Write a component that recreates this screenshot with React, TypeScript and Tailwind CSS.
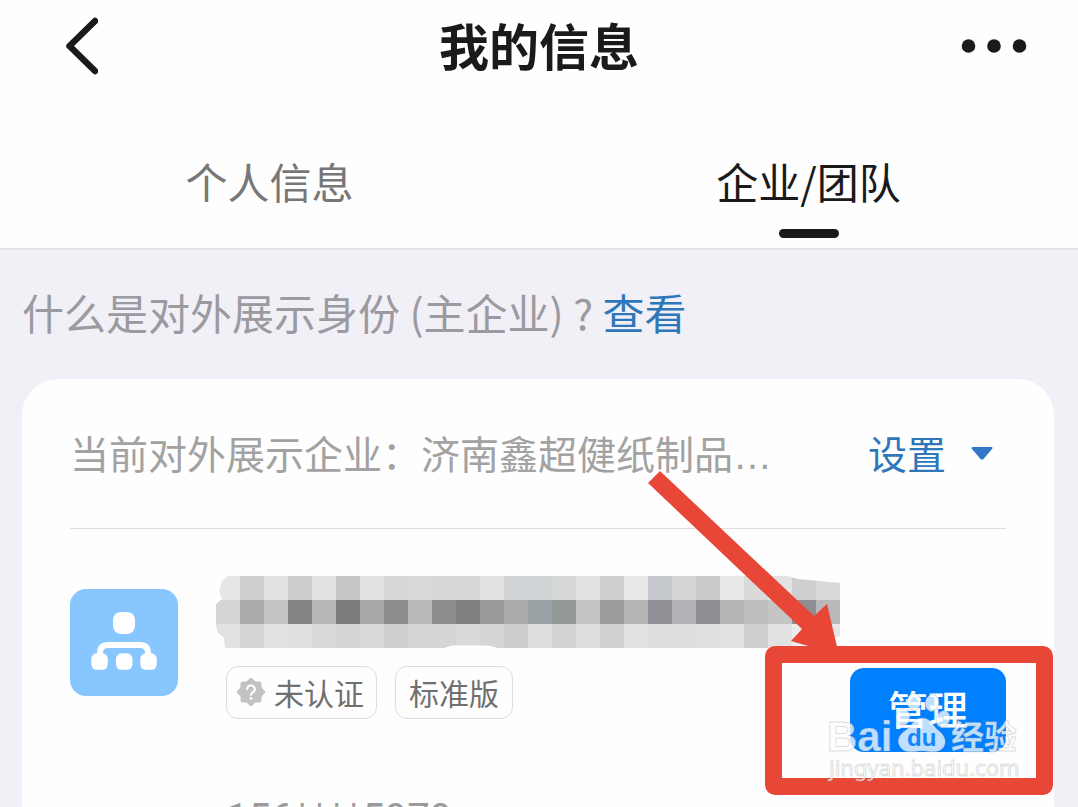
import { useState } from 'react';
import clsx from 'clsx';

const FONT_CLASS = "font-['Noto_Sans_CJK_SC',sans-serif]";

const TABS = ['个人信息', '企业/团队'];

const CELL = 24;

const MOSAIC_ROWS = [
  [
    '#e6e6e6', '#cfcfcf', '#e2e2e2', '#cdcdcd', '#e2e2e2', '#c6c6c6', '#e2e2e2', '#d8d8d8', '#d9d9d9', '#d8d8d8',
    '#d6d8d7', '#e1e1e1', '#d0d4d6', '#d0d4d7', '#d6d8d8', '#e2e2e2', '#cecece', '#e9e9e9', '#c6c9cd', '#d5d5d6',
    '#cbcbcc', '#e8e8e8', '#dadada', '#e3e3e3', '#cfcfcf', '#d9d9d9',
  ],
  [
    '#d5d5d5', '#a9abad', '#c4c4c4', '#858585', '#b7b7b7', '#7c7c7c', '#a9a9a9', '#8d8d8d', '#b9b9b9', '#8b8c8b',
    '#80827f', '#999b9a', '#a9acab', '#98a1a3', '#939a97', '#c2c3c2', '#9a9d9b', '#b5b5b5', '#909196', '#b3b3b8',
    '#8e8f93', '#b5b5b5', '#bdbdbd', '#c5c5c5', '#8f8f93', '#b9b9bb',
  ],
  [
    '#e1e1e1', '#d3d4d4', '#e0e1e0', '#dfe1df', '#d9dbda', '#d5d6d5', '#d8dad9', '#cecfce', '#d3d4d3', '#d4d6d5',
    '#d9dbda', '#d4d6d5', '#cccecd', '#dddfde', '#d2d4d3', '#dcdddc', '#cfd0cf', '#e0e1e0', '#dcdedd', '#dddfde',
    '#dfe0df', '#e1e1e1', '#cfcfcf', '#e2e2e2', '#ececec', '#e6e6e6',
  ],
];

function BlurredName() {
  return (
    <svg viewBox="0 0 624 72" className="w-full max-w-[624px]" aria-hidden="true">
      <clipPath id="smear">
        <path d="M12 0 H572 L582 3 L624 7 V60 L600 68 L560 72 H282 L272 69.500 H236 L228 72 H9 L8 62 L2 57 L0 50 V28 L6 23 L3 16 L6 5 Z" />
      </clipPath>
      <g clipPath="url(#smear)" shapeRendering="crispEdges">
        {MOSAIC_ROWS.map((row, y) =>
          row.map((fill, x) => (
            <rect key={`${x}-${y}`} x={x * CELL} y={y * CELL} width={CELL} height={CELL} fill={fill} />
          )),
        )}
      </g>
    </svg>
  );
}

function OrgIcon() {
  return (
    <svg viewBox="0 0 108 108" className="mt-[13px] size-[108px] shrink-0" aria-hidden="true">
      <rect width="108" height="107" rx="16" fill="#87c6ff" />
      <rect x="43" y="23" width="22" height="22" rx="8" fill="#fff" />
      <path d="M30 70 V64 Q30 56 38 56 H70 Q78 56 78 64 V70" fill="none" stroke="#fff" strokeWidth="6" />
      <rect x="21.300" y="64.300" width="16.500" height="16.500" rx="5.500" fill="#fff" />
      <rect x="46" y="64.300" width="16.500" height="16.500" rx="5.500" fill="#fff" />
      <rect x="70.300" y="64.300" width="16.500" height="16.500" rx="5.500" fill="#fff" />
    </svg>
  );
}

function BadgeIcon() {
  return (
    <svg viewBox="0 0 30 30" className="size-[30px]" aria-hidden="true">
      <g fill="#c2c2c2">
        <rect x="4.500" y="4.500" width="21" height="21" rx="2" />
        <rect x="4.500" y="4.500" width="21" height="21" rx="2" transform="rotate(45 15 15)" />
      </g>
      <path d="M11.200 12.300 A3.800 3.600 0 1 1 16.700 15.300 Q15 16.300 15 18" fill="none" stroke="#fff" strokeWidth="2" strokeLinecap="round" />
      <circle cx="15" cy="21.300" r="1.400" fill="#fff" />
    </svg>
  );
}

function Arrow() {
  return (
    <svg viewBox="0 0 210 200" className="absolute -top-[203px] -left-[210px] h-[200px] w-[210px] max-w-none" aria-hidden="true">
      <path d="M20 6 L174 151 L187 139 L199 190 L151 176 L162 164 L8 18 Z" fill="#e84637" />
    </svg>
  );
}

function Watermark() {
  return (
    <svg
      viewBox="0 0 200 96"
      className="absolute top-[22px] -left-[26px] h-24 w-[200px] max-w-none"
      fill="#fff"
      fillOpacity="0.75"
      stroke="#8c8c8c"
      strokeOpacity="0.3"
    >
      <text x="3" y="61" fontFamily="Liberation Sans, sans-serif" fontWeight="700" fontSize="42">
        Bai
      </text>
      <ellipse cx="79" cy="27" rx="6.800" ry="8.500" />
      <ellipse cx="90" cy="12" rx="6.800" ry="8.500" />
      <ellipse cx="108" cy="13" rx="6.800" ry="8.500" transform="rotate(8 108 13)" />
      <ellipse cx="119" cy="29" rx="6.800" ry="8.500" transform="rotate(20 119 29)" />
      <path d="M98 28 C107 28 108 35 114 40 C122 46 123 53 119 58 C114 64 106 61 98 61 C89 61 82 64 77 58 C72 52 74 45 82 40 C89 35 89 28 98 28 Z" />
      <text x="83" y="56" fontFamily="Liberation Sans, sans-serif" fontWeight="700" fontSize="24" fill="#1684fb" fillOpacity="1" stroke="none">
        du
      </text>
      <text x="127" y="59" fontFamily="Noto Sans CJK SC, sans-serif" fontWeight="700" fontSize="33">
        经验
      </text>
      <text x="5" y="86" fontFamily="Noto Sans, sans-serif" fontSize="22">
        jingyan.baidu.com
      </text>
    </svg>
  );
}

export default function App() {
  const [activeTab, setActiveTab] = useState(1);

  return (
    <div className={clsx('flex h-screen flex-col overflow-hidden bg-[#f1f0f6]', FONT_CLASS)}>
      <header className="border-b-2 border-[#e4e4e6] bg-[#fefefe] text-[#1a1a1a]">
        <div className="grid h-[92px] grid-cols-3 items-center">
          <button type="button" aria-label="返回" className="ml-[58px] w-10">
            <svg viewBox="0 0 40 60" className="h-[60px] w-10">
              <path d="M37 5 L11.500 30 L37 55" fill="none" stroke="currentColor" strokeWidth="6.500" strokeLinecap="round" strokeLinejoin="round" />
            </svg>
          </button>
          <h1 className="pb-1 text-center text-[50px] leading-[72px] font-bold">我的信息</h1>
          <button type="button" aria-label="更多" className="mr-[50px] justify-self-end">
            <svg viewBox="0 0 68 18" className="h-[18px] w-[68px]" fill="currentColor">
              <circle cx="8.500" cy="9" r="6.800" />
              <circle cx="34" cy="9" r="6.800" />
              <circle cx="59.500" cy="9" r="6.800" />
            </svg>
          </button>
        </div>
        <nav className="grid grid-cols-2">
          {TABS.map((tab, index) => (
            <button
              key={tab}
              type="button"
              onClick={() => setActiveTab(index)}
              className={clsx(
                'flex flex-col items-center pt-[59px] pb-[10px] text-[42px] leading-[60px]',
                index === activeTab ? 'text-[#1a1a1a]' : 'text-[#777777]',
              )}
            >
              {tab}
              <span className={clsx('mt-[18px] h-[9px] w-[60px] rounded-full', index === activeTab && 'bg-[#1a1a1a]')} />
            </button>
          ))}
        </nav>
      </header>

      <main className="flex flex-1 flex-col">
        <p className="px-[22px] pt-8 pb-[37px] text-[42px] leading-[60px] text-[#9b9aa0]">
          什么是对外展示身份 (主企业) ?{' '}
          <a href="#about" className="text-[#2e77bb]">
            查看
          </a>
        </p>

        <section className="mr-6 ml-[22px] flex-1 rounded-t-[36px] bg-[#fefefe] px-12">
          <div className="flex h-[150px] items-center justify-between border-b border-[#dfdfdf] pr-3">
            <p className="text-[39px] leading-[56px] text-[#a2a2a2]">
              当前对外展示企业：济南鑫超健纸制品
              <span className="font-['Liberation_Sans',sans-serif]">…</span>
            </p>
            <button type="button" className="flex items-center gap-6 pb-1 text-[39px] leading-[56px] text-[#2e77bb]">
              设置
              <svg viewBox="0 0 24 16" className="mt-1 h-4 w-6" fill="#3377c8" aria-hidden="true">
                <path d="M3 1 H21 Q23.500 1 22 3 L13.500 13 Q12 14.500 10.500 13 L2 3 Q.5 1 3 1 Z" />
              </svg>
            </button>
          </div>

          <div className="flex items-start pt-[47px]">
            <OrgIcon />
            <div className="ml-[38px] min-w-0 flex-1">
              <BlurredName />
              <div className="mt-[18px] ml-[10px] flex gap-[18px] text-[30px] leading-[50px] text-[#707070]">
                <span className="flex items-center gap-2 rounded-[12px] border border-[#dcdcdc] pr-3 pb-px pl-[9px]">
                  <BadgeIcon />
                  未认证
                </span>
                <span className="rounded-[12px] border border-[#dcdcdc] px-[13px] pb-px">标准版</span>
              </div>
              <p className="mt-[72px] ml-[10px] font-['Roboto',sans-serif] text-[40px] leading-[56px] text-[#9b9b9b]">
                156****5979
              </p>
            </div>
            <div className="relative mt-[92px] ml-[10px] shrink-0">
              <button
                type="button"
                className="block h-[84px] w-[156px] rounded-[14px] bg-[#007fff] pb-1 text-[40px] leading-[80px] font-medium text-white"
              >
                管理
              </button>
              <div className="absolute -top-[22px] -right-[47px] -bottom-[43px] -left-[85px] rounded-[10px] border-[17px] border-[#e84637]" />
              <Arrow />
              <Watermark />
            </div>
          </div>
        </section>
      </main>
    </div>
  );
}
